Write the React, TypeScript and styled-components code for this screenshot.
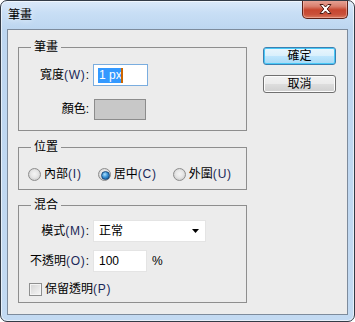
import React from "react";
import styled, { createGlobalStyle, css } from "styled-components";

const GlobalStyle = createGlobalStyle`
  html, body { margin: 0; padding: 0; background: #ffffff; }
  body {
    font-family: "Liberation Sans", "Noto Sans CJK TC", sans-serif;
    font-size: 12px;
    line-height: 15px;
    color: #000;
    text-autospace: no-autospace;
  }
  * { box-sizing: border-box; }
`;

const Window = styled.div`
  width: 355px;
  height: 322px;
  border: 1px solid #333b46;
  border-radius: 7px;
  background: linear-gradient(180deg, #dbe9f9 0px, #c8def5 12px, #bdd6f0 28px, #c3daf2 100%);
  box-shadow: inset 0 0 0 1px rgba(255, 255, 255, 0.6);
  padding: 0 6px 6px 6px;
  display: flex;
  flex-direction: column;
  overflow: hidden;
`;

const TitleBar = styled.div`
  height: 28px;
  display: flex;
  align-items: flex-start;
  justify-content: space-between;
  flex: none;
`;

const Title = styled.div`
  line-height: 28px;
  padding-left: 1px;
  font-size: 12px;
  color: #000;
  text-shadow: 0 0 6px rgba(255, 255, 255, 0.9);
`;

const CloseButton = styled.div`
  margin-top: -1px;
  width: 46px;
  height: 19px;
  border: 1px solid #5d2118;
  border-top: none;
  border-radius: 0 0 5px 5px;
  background: linear-gradient(180deg, #e8a79a 0%, #d9806f 35%, #c7462f 55%, #c9503a 80%, #d97a5f 100%);
  box-shadow: inset 0 0 0 1px rgba(255, 210, 200, 0.45);
  display: flex;
  align-items: center;
  justify-content: center;
`;

const Client = styled.div`
  flex: 1;
  border: 1px solid #7d8b9c;
  background: #ececec;
  display: flex;
  gap: 16px;
  padding: 10px 11px 0 10px;
`;

const GroupsColumn = styled.div`
  width: 229px;
  display: flex;
  flex-direction: column;
`;

const Group = styled.fieldset<{ $mt?: number }>`
  margin: ${(p) => p.$mt ?? 0}px 0 0 0;
  padding: 0;
  border: 1px solid #8e8e8e;
  min-width: 0;
`;

const Legend = styled.legend`
  padding: 0 3px;
  margin-left: 12px;
  line-height: 15px;
  font-size: 12px;
`;

const GroupBody = styled.div<{ $pt: number; $pb: number }>`
  padding: ${(p) => p.$pt}px 0 ${(p) => p.$pb}px 0;
  display: flex;
  flex-direction: column;
`;

const FieldGrid = styled.div<{ $rowGap: number }>`
  display: grid;
  grid-template-columns: 70px auto;
  column-gap: 4px;
  row-gap: ${(p) => p.$rowGap}px;
  align-items: center;
  justify-items: start;
`;

const Label = styled.span`
  justify-self: end;
  white-space: nowrap;
`;

const Mn = styled.span`
  color: #1a2858;
  letter-spacing: 0.8px;
`;

const Field = styled.div<{ $w: number; $focus?: boolean }>`
  width: ${(p) => p.$w}px;
  height: 22px;
  background: #ffffff;
  border: 1px solid ${(p) => (p.$focus ? "#7aaddf" : "#e4e4e4")};
  display: flex;
  align-items: center;
  padding: 0 6px 0 ${(p) => (p.$focus ? 4 : 5)}px;
`;

const Selection = styled.span`
  background: #3399ff;
  color: #ffffff;
  height: 15px;
  line-height: 15px;
  padding-left: 1px;
  display: flex;
  align-items: center;
`;

const Caret = styled.span`
  width: 2px;
  height: 15px;
  background: #cc6600;
  margin-left: -1px;
`;

const SelectText = styled.span`
  flex: 1;
`;

const Swatch = styled.div`
  width: 52px;
  height: 21px;
  margin-left: 1px;
  background: #c8c8c8;
  border: 1px solid #8c8c8c;
`;

const UnitWrap = styled.div`
  display: flex;
  align-items: center;
  gap: 5px;
`;

const RadioRow = styled.div`
  display: flex;
  align-items: center;
  gap: 16px;
  padding-left: 9px;
  height: 15px;
`;

const RadioItem = styled.label`
  display: flex;
  align-items: center;
  gap: 3px;
  white-space: nowrap;
`;

const ItemText = styled.span`
  white-space: nowrap;
`;

const RadioCircle = styled.span<{ $checked?: boolean }>`
  width: 13px;
  height: 13px;
  border-radius: 50%;
  border: 1px solid #8d8d8d;
  background: radial-gradient(circle at 50% 45%, #f4f4f4 0%, #e6e6e6 45%, #cfcfcf 75%, #f7f7f7 100%);
  position: relative;
  flex: none;
  ${(p) =>
    p.$checked &&
    css`
      &::after {
        content: "";
        position: absolute;
        left: 2px;
        top: 2px;
        width: 7px;
        height: 7px;
        border-radius: 50%;
        border: 1px solid #1b4b7d;
        background: radial-gradient(circle at 40% 35%, #aee0fc 0%, #3a93d6 45%, #0d4d8e 100%);
      }
    `}
`;

const CheckRow = styled.label<{ $mt: number }>`
  display: flex;
  align-items: center;
  gap: 3px;
  padding-left: 10px;
  margin-top: ${(p) => p.$mt}px;
  height: 15px;
`;

const CheckBox = styled.span`
  width: 13px;
  height: 13px;
  border: 1px solid #8e8f8f;
  background: linear-gradient(135deg, #d3d3d3 0%, #e9e9e9 60%, #f6f6f6 100%);
  box-shadow: inset 0 0 0 1px #f4f4f4;
  flex: none;
`;

const ButtonColumn = styled.div`
  margin-top: 7px;
  display: flex;
  flex-direction: column;
  gap: 10px;
`;

const DialogButton = styled.div<{ $primary?: boolean }>`
  width: 73px;
  height: 18px;
  border-radius: 3px;
  display: flex;
  align-items: center;
  justify-content: center;
  font-size: 12px;
  line-height: 15px;
  ${(p) =>
    p.$primary
      ? css`
          border: 1px solid #3c7fb1;
          background: linear-gradient(180deg, #eaf6fd 0%, #d9f0fc 48%, #bee6fd 52%, #a7d9f5 100%);
          box-shadow: inset 0 0 0 1px #48c9f7;
        `
      : css`
          border: 1px solid #707070;
          background: linear-gradient(180deg, #f2f2f2 0%, #ebebeb 48%, #dddddd 52%, #cfcfcf 100%);
          box-shadow: inset 0 0 0 1px #fcfcfc;
        `}
`;

const ArrowDown = () => (
  <svg width="7" height="4" viewBox="0 0 7 4">
    <path d="M0 0 H7 L3.5 4 Z" fill="#000" />
  </svg>
);

const CloseX = () => (
  <svg width="13" height="11" viewBox="0 0 13 11">
    <path
      d="M1 0.5 H4.2 L6.5 3 L8.8 0.5 H12 L8.2 5 L12 9.5 H8.8 L6.5 7 L4.2 9.5 H1 L4.8 5 Z"
      fill="#ffffff"
      stroke="#4a1a12"
      strokeWidth="1"
      strokeLinejoin="round"
    />
  </svg>
);

export default function App() {
  return (
    <>
      <GlobalStyle />
      <Window>
        <TitleBar>
          <Title>筆畫</Title>
          <CloseButton>
            <CloseX />
          </CloseButton>
        </TitleBar>
        <Client>
          <GroupsColumn>
            <Group>
              <Legend>筆畫</Legend>
              <GroupBody $pt={9} $pb={10}>
                <FieldGrid $rowGap={13}>
                  <Label>
                    寬度<Mn>(W)</Mn>:
                  </Label>
                  <Field $w={55} $focus>
                    <Selection>1 px</Selection>
                    <Caret />
                  </Field>
                  <Label>顏色:</Label>
                  <Swatch />
                </FieldGrid>
              </GroupBody>
            </Group>
            <Group $mt={9}>
              <Legend>位置</Legend>
              <GroupBody $pt={12} $pb={7}>
                <RadioRow>
                  <RadioItem>
                    <RadioCircle />
                    <ItemText>
                      內部<Mn>(I)</Mn>
                    </ItemText>
                  </RadioItem>
                  <RadioItem>
                    <RadioCircle $checked />
                    <ItemText>
                      居中<Mn>(C)</Mn>
                    </ItemText>
                  </RadioItem>
                  <RadioItem>
                    <RadioCircle />
                    <ItemText>
                      外圍<Mn>(U)</Mn>
                    </ItemText>
                  </RadioItem>
                </RadioRow>
              </GroupBody>
            </Group>
            <Group $mt={8}>
              <Legend>混合</Legend>
              <GroupBody $pt={7} $pb={5}>
                <FieldGrid $rowGap={8}>
                  <Label>
                    模式<Mn>(M)</Mn>:
                  </Label>
                  <Field $w={113}>
                    <SelectText>正常</SelectText>
                    <ArrowDown />
                  </Field>
                  <Label>
                    不透明<Mn>(O)</Mn>:
                  </Label>
                  <UnitWrap>
                    <Field $w={54}>100</Field>
                    <span>%</span>
                  </UnitWrap>
                </FieldGrid>
                <CheckRow $mt={10}>
                  <CheckBox />
                  <ItemText>
                    保留透明<Mn>(P)</Mn>
                  </ItemText>
                </CheckRow>
              </GroupBody>
            </Group>
          </GroupsColumn>
          <ButtonColumn>
            <DialogButton $primary>確定</DialogButton>
            <DialogButton>取消</DialogButton>
          </ButtonColumn>
        </Client>
      </Window>
    </>
  );
}
